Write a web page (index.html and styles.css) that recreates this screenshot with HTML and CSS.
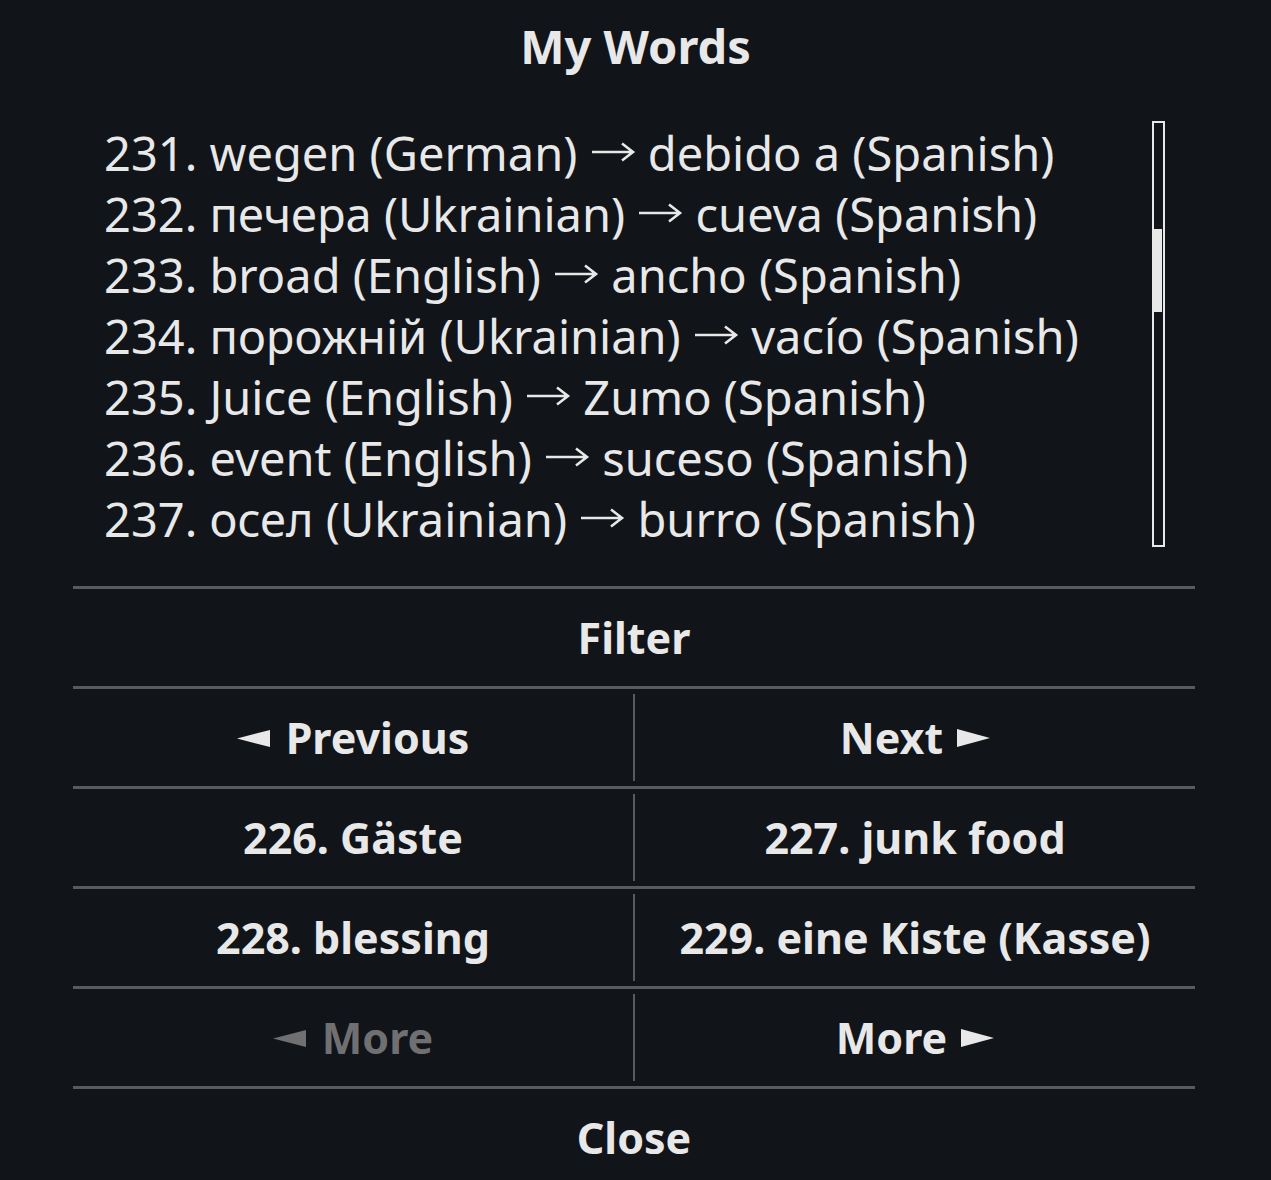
FILE: index.html
```html
<!DOCTYPE html>
<html lang="en">
<head>
<meta charset="utf-8">
<title>My Words</title>
<link rel="stylesheet" href="styles.css">
</head>
<body>
<div class="dialog">
  <div class="title">My Words</div>
  <div class="content">
    <div class="list">
      <div class="row">231. wegen (German) <svg class="arrow" viewBox="0 0 46 24" role="img" aria-label="→"><path d="M2 12H43M32 3.5L43 12L32 20.5"/></svg> debido a (Spanish)</div>
      <div class="row">232. печера (Ukrainian) <svg class="arrow" viewBox="0 0 46 24" role="img" aria-label="→"><path d="M2 12H43M32 3.5L43 12L32 20.5"/></svg> cueva (Spanish)</div>
      <div class="row">233. broad (English) <svg class="arrow" viewBox="0 0 46 24" role="img" aria-label="→"><path d="M2 12H43M32 3.5L43 12L32 20.5"/></svg> ancho (Spanish)</div>
      <div class="row">234. порожній (Ukrainian) <svg class="arrow" viewBox="0 0 46 24" role="img" aria-label="→"><path d="M2 12H43M32 3.5L43 12L32 20.5"/></svg> vacío (Spanish)</div>
      <div class="row">235. Juice (English) <svg class="arrow" viewBox="0 0 46 24" role="img" aria-label="→"><path d="M2 12H43M32 3.5L43 12L32 20.5"/></svg> Zumo (Spanish)</div>
      <div class="row">236. event (English) <svg class="arrow" viewBox="0 0 46 24" role="img" aria-label="→"><path d="M2 12H43M32 3.5L43 12L32 20.5"/></svg> suceso (Spanish)</div>
      <div class="row">237. осел (Ukrainian) <svg class="arrow" viewBox="0 0 46 24" role="img" aria-label="→"><path d="M2 12H43M32 3.5L43 12L32 20.5"/></svg> burro (Spanish)</div>
    </div>
    <div class="scrollbar"><div class="thumb"></div></div>
  </div>
  <div class="buttons">
    <div class="btn-row single"><div class="btn">Filter</div></div>
    <div class="btn-row pair">
      <div class="btn"><svg class="tri left" viewBox="0 0 33 17"><polygon points="0,8.5 33,0 33,17"/></svg><span>Previous</span></div>
      <div class="divider"></div>
      <div class="btn"><span>Next</span><svg class="tri right" viewBox="0 0 33 18"><polygon points="0,0 33,9 0,18"/></svg></div>
    </div>
    <div class="btn-row pair">
      <div class="btn">226. Gäste</div>
      <div class="divider"></div>
      <div class="btn">227. junk food</div>
    </div>
    <div class="btn-row pair">
      <div class="btn">228. blessing</div>
      <div class="divider"></div>
      <div class="btn">229. eine Kiste (Kasse)</div>
    </div>
    <div class="btn-row pair">
      <div class="btn disabled"><svg class="tri left" viewBox="0 0 33 17"><polygon points="0,8.5 33,0 33,17"/></svg><span>More</span></div>
      <div class="divider"></div>
      <div class="btn"><span>More</span><svg class="tri right" viewBox="0 0 33 18"><polygon points="0,0 33,9 0,18"/></svg></div>
    </div>
    <div class="btn-row single"><div class="btn">Close</div></div>
  </div>
</div>
</body>
</html>
```

FILE: styles.css
```css
html, body {
  margin: 0;
  padding: 0;
  background: #111419;
}
body {
  width: 1271px;
  height: 1180px;
  overflow: hidden;
  color: #e8e8e8;
  font-family: "Noto Sans", "DejaVu Sans", sans-serif;
}
.dialog {
  display: flex;
  flex-direction: column;
}
.title {
  height: 92px;
  line-height: 92px;
  text-align: center;
  font-weight: 700;
  font-size: 47px;
}
.content {
  display: flex;
  height: 426px;
  margin-top: 29px;
  padding-left: 104px;
  padding-right: 106px;
}
.list {
  flex: 1;
  padding-top: 2px;
  font-size: 47px;
}
.row {
  height: 61px;
  line-height: 61px;
  white-space: nowrap;
}
.arrow {
  width: 46px;
  height: 24px;
  vertical-align: 7px;
  fill: none;
  stroke: #e8e8e8;
  stroke-width: 2.6;
  stroke-linecap: butt;
}
.scrollbar {
  width: 9px;
  border: 2px solid #e8e8e8;
  box-sizing: content-box;
  height: 422px;
}
.thumb {
  margin-top: 106px;
  margin-left: -2px;
  width: 10px;
  height: 83px;
  background: #e8e8e8;
}
.buttons {
  margin: 39px 76px 0 73px;
  display: flex;
  flex-direction: column;
}
.btn-row {
  border-top: 3px solid #5a5a5c;
  height: 97px;
  display: flex;
}
.btn-row.pair {
  display: grid;
  grid-template-columns: 1fr 2px 1fr;
}
.btn {
  flex: 1;
  display: flex;
  align-items: center;
  justify-content: center;
  font-weight: 700;
  font-size: 43px;
  white-space: nowrap;
}
.btn.disabled {
  color: #707073;
}
.divider {
  background: #5a5a5c;
  margin: 5px 0;
}
.tri {
  fill: currentColor;
  flex: none;
}
.tri.left {
  width: 33px;
  height: 17px;
  margin-right: 16px;
  margin-top: 2px;
}
.tri.right {
  width: 33px;
  height: 18px;
  margin-left: 14px;
}
```
